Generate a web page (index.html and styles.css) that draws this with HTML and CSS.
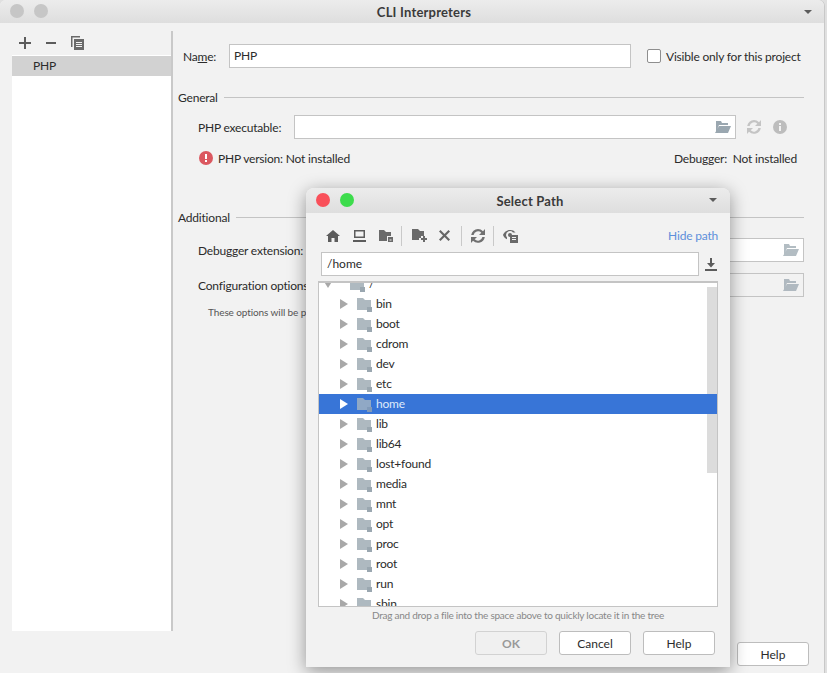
FILE: index.html
```html
<!DOCTYPE html>
<html>
<head>
<meta charset="UTF-8">
<title>CLI Interpreters</title>
<link rel="stylesheet" href="styles.css">
</head>
<body>
<svg class="defs" width="0" height="0">
	<symbol id="folder" viewBox="0 0 16 14"><path d="M0 0h6l2 2h6v10H0z" fill="#aeb9c0"/><path d="M10 9h5v5h-5z" fill="#9aa7b0"/></symbol>
	<symbol id="open" viewBox="0 0 16 12"><path d="M1 0h5l1 2h6v2H4L1 11z M4 5h12l-3 7H0z" fill="#9aa7b0"/></symbol>
	<symbol id="sync" viewBox="0 0 14 14"><path d="M7 0a7 7 0 0 1 5 2.200L14 0v6H8l2.300-2.300A4.600 4.600 0 0 0 2.600 6H.2A7 7 0 0 1 7 0zM0 8h6l-2.300 2.300A4.600 4.600 0 0 0 11.400 8h2.400A7 7 0 0 1 2 11.800L0 14z"/></symbol>
</svg>
<div class="window">
	<div class="titlebar">
		<span class="dots"><i></i><i></i></span>
		<b class="title">CLI Interpreters</b>
		<span class="arrow"></span>
	</div>
	<div class="content">
		<div class="side">
			<div class="side-tools">
				<svg width="12" height="12" viewBox="0 0 12 12"><path d="M5 0h2v5h5v2H7v5H5V7H0V5h5z" fill="#5c5c5c"/></svg>
				<svg width="12" height="12" viewBox="0 0 12 12"><path d="M1 5h10v2H1z" fill="#5c5c5c"/></svg>
				<svg width="13" height="14" viewBox="0 0 13 14"><path d="M0 0h9v1.500H1.500V11H0z M3 3h10v11H3z" fill="#6a6a6a"/><path d="M5 6h6v1H5zM5 8h6v1H5zM5 10h6v1H5z" fill="#f2f2f2"/></svg>
			</div>
			<div class="side-list">
				<div class="side-item">PHP</div>
			</div>
		</div>
		<div class="main">
			<div class="name-row">
				<label class="name-label">Na<u>m</u>e:</label>
				<div class="field name-field">PHP</div>
				<span class="check"></span>
				<span class="check-label">Visible only for this project</span>
			</div>
			<div class="section general"><span>General</span><i></i></div>
			<div class="exe-row">
				<label>PHP executable:</label>
				<div class="field exe-field"><svg class="open-icon" width="16" height="12"><use href="#open"/></svg></div>
				<svg class="dim" width="14" height="14"><use href="#sync"/></svg>
				<svg class="info" width="14" height="14" viewBox="0 0 14 14"><circle cx="7" cy="7" r="7" fill="#bdbdbd"/><path d="M6 3h2v2H6zM6 6h2v5H6z" fill="#f2f2f2"/></svg>
			</div>
			<div class="version-row">
				<svg width="14" height="14" viewBox="0 0 14 14"><circle cx="7" cy="7" r="7" fill="#db5860"/><path d="M6 3h2v5H6zM6 9h2v2H6z" fill="#fff"/></svg>
				<span class="version">PHP version: Not installed</span>
				<span class="debugger">Debugger:&nbsp; Not installed</span>
			</div>
			<div class="section additional"><span>Additional</span><i></i></div>
			<div class="opt-row">
				<label>Debugger extension:</label>
				<div class="field opt-field"><svg class="open-icon" width="16" height="12"><use href="#open"/></svg></div>
			</div>
			<div class="opt-row second">
				<label>Configuration options:</label>
				<div class="field opt-field off"><svg class="open-icon" width="16" height="12"><use href="#open"/></svg></div>
			</div>
			<div class="hint">These options will be passed to PHP</div>
		</div>
	</div>
	<div class="bottom"><button class="btn help-main">Help</button></div>
</div>

<div class="dialog">
	<div class="dlg-title">
		<span class="lights"><i class="red"></i><i class="green"></i></span>
		<b class="title">Select Path</b>
		<span class="arrow"></span>
	</div>
	<div class="dlg-tools">
		<svg width="14" height="12" viewBox="0 0 14 12"><path d="M7 0l7 6h-2v6H8.500V8h-3v4H2V6H0z" fill="#5c5c5c"/></svg>
		<svg class="tool-laptop" width="13" height="12" viewBox="0 0 13 12"><path d="M1 0h11v8H1zM2.500 1.500v5h8v-5zM0 10h13v2H0z" fill="#5c5c5c" fill-rule="evenodd"/></svg>
		<svg class="tool-folder" width="14" height="13" viewBox="0 0 14 13"><path d="M0 1h5l2 2h5v4H8v5H0z" fill="#6a6a6a"/><path d="M9 8h5v5H9z" fill="#6a6a6a"/><path d="M10.500 10.500h2v1h-2z" fill="#f2f2f2"/></svg>
		<i class="sep sep-a"></i>
		<svg class="tool-new" width="15" height="13" viewBox="0 0 15 13"><path d="M0 0h6l2 2h4v5H9v2H7v2H0z" fill="#6a6a6a"/><path d="M11 7h2v2h2v2h-2v2h-2v-2H9V9h2z" fill="#6a6a6a"/></svg>
		<svg class="tool-x" width="11" height="11" viewBox="0 0 11 11"><path d="M1.500 0l4 4 4-4L11 1.500l-4 4 4 4L9.500 11l-4-4-4 4L0 9.500l4-4-4-4z" fill="#666"/></svg>
		<i class="sep"></i>
		<svg class="tool-sync" width="14" height="14" fill="#707070"><use href="#sync"/></svg>
		<i class="sep sep-c"></i>
		<svg class="tool-eye" width="15" height="14" viewBox="0 0 15 14"><path d="M7 1C3.500 1 1 3.500 0 6c.6 1.600 2 3.400 4 4.300V8.500A4 4 0 0 1 3 6a4 4 0 0 1 7-2.600h2.600A7 7 0 0 0 7 1z" fill="#6a6a6a"/><circle cx="7" cy="6" r="2" fill="#6a6a6a"/><path d="M7 6h8v8H7z" fill="#6a6a6a"/><path d="M9 8h4v1H9zM9 10h4v1H9z" fill="#f2f2f2"/></svg>
		<span class="hide-path">Hide path</span>
	</div>
	<div class="path-row">
		<div class="field path-field">/home</div>
		<svg width="12" height="13" viewBox="0 0 12 13"><path d="M5 0h2v5h3L6 9.500 2 5h3zM0 11h12v2H0z" fill="#5c5c5c"/></svg>
	</div>
	<div class="tree">
		<div class="tree-rows">
			<div class="row root"><span class="tri down"></span><svg width="16" height="14"><use href="#folder"/></svg><span>/</span></div>
			<div class="row"><span class="tri"></span><svg width="16" height="14"><use href="#folder"/></svg><span>bin</span></div>
			<div class="row"><span class="tri"></span><svg width="16" height="14"><use href="#folder"/></svg><span>boot</span></div>
			<div class="row"><span class="tri"></span><svg width="16" height="14"><use href="#folder"/></svg><span>cdrom</span></div>
			<div class="row"><span class="tri"></span><svg width="16" height="14"><use href="#folder"/></svg><span>dev</span></div>
			<div class="row"><span class="tri"></span><svg width="16" height="14"><use href="#folder"/></svg><span>etc</span></div>
			<div class="row selected"><span class="tri"></span><svg width="16" height="14"><use href="#folder"/></svg><span>home</span></div>
			<div class="row"><span class="tri"></span><svg width="16" height="14"><use href="#folder"/></svg><span>lib</span></div>
			<div class="row"><span class="tri"></span><svg width="16" height="14"><use href="#folder"/></svg><span>lib64</span></div>
			<div class="row"><span class="tri"></span><svg width="16" height="14"><use href="#folder"/></svg><span>lost+found</span></div>
			<div class="row"><span class="tri"></span><svg width="16" height="14"><use href="#folder"/></svg><span>media</span></div>
			<div class="row"><span class="tri"></span><svg width="16" height="14"><use href="#folder"/></svg><span>mnt</span></div>
			<div class="row"><span class="tri"></span><svg width="16" height="14"><use href="#folder"/></svg><span>opt</span></div>
			<div class="row"><span class="tri"></span><svg width="16" height="14"><use href="#folder"/></svg><span>proc</span></div>
			<div class="row"><span class="tri"></span><svg width="16" height="14"><use href="#folder"/></svg><span>root</span></div>
			<div class="row"><span class="tri"></span><svg width="16" height="14"><use href="#folder"/></svg><span>run</span></div>
			<div class="row"><span class="tri"></span><svg width="16" height="14"><use href="#folder"/></svg><span>sbin</span></div>
		</div>
		<div class="scroll"></div>
	</div>
	<div class="drag-hint">Drag and drop a file into the space above to quickly locate it in the tree</div>
	<div class="dlg-buttons">
		<button class="btn disabled">OK</button>
		<button class="btn">Cancel</button>
		<button class="btn">Help</button>
	</div>
</div>
</body>
</html>
```

FILE: styles.css
```css
*{box-sizing:border-box}
html,body{height:100%}
body{margin:0;background:#e0e0e0;font:12px Lato,"Open Sans",sans-serif;letter-spacing:-.2px;color:#2b2b2b;overflow:hidden}
.defs{position:absolute}
.window{width:824px;height:673px;background:#f2f2f2;border-radius:6px 6px 0 0;box-shadow:1px 0 #c8c8c8;display:flex;flex-direction:column}
.titlebar{height:23px;flex:none;display:flex;align-items:center;justify-content:center;padding-left:24px;background:linear-gradient(#ececec,#dedede);border-radius:6px 6px 0 0;position:relative}
.title{font-size:13px;letter-spacing:.2px;color:#3a3a3a}
.dots{position:absolute;left:10px;top:4px;display:flex;gap:10px}
.dots i{width:14px;height:14px;border-radius:50%;background:#c6c6c6}
.arrow{position:absolute;right:12px;top:10px;border:4px solid transparent;border-top:4px solid #5c5c5c;border-bottom:0}
.content{flex:1;display:flex;padding-left:12px;min-height:0;position:relative;z-index:1}
.side{width:161px;height:600px;flex:none;border-right:2px solid #c9c9c9;margin-top:8px;display:flex;flex-direction:column}
.side-tools{height:24px;flex:none;display:flex;align-items:center;gap:14px;padding:0 0 0 7px}
.side-list{flex:1;background:#fff;padding-top:1px}
.side-item{height:20px;background:#d2d2d2;padding-left:21px;line-height:20px}
.main{flex:1;padding:0 20px 0 5px}
.field{background:#fff;border:1px solid #c4c4c4;height:24px;line-height:22px;display:flex;align-items:center;justify-content:space-between;padding:0 4px}
.name-row{display:flex;align-items:center;margin-top:21px;height:24px;padding-left:5px}
.name-label{width:46px}
.name-field{width:402px}
.check{width:14px;height:14px;flex:none;border:1px solid #8e8e8e;border-radius:2px;background:#fff;margin-left:16px}
.check-label{margin-left:5px;white-space:nowrap}
.section{display:flex;align-items:center;gap:6px}
.section i{flex:1;height:1px;background:#c4c4c4}
.general{margin-top:20px;height:18px}
.exe-row{display:flex;align-items:center;height:24px;margin-top:9px;padding-left:20px}
.exe-row label{width:96px}
.exe-field{width:442px}
.dim{fill:#c4c4c4;margin-left:11px}
.info{margin-left:12px}
.open-icon{flex:none;margin-left:auto}
.version-row{display:flex;align-items:center;height:18px;margin-top:10px;padding-left:21px}
.version{margin-left:5px}
.debugger{margin-left:auto;margin-right:7px}
.additional{margin-top:41px;height:18px}
.opt-row{display:flex;align-items:center;height:24px;margin-top:12px;padding-left:20px}
.opt-row label{width:180px}
.opt-field{flex:1}
.opt-field .open-icon{opacity:.75}
.off{background:#f2f2f2}
.second{margin-top:11px}
.hint{font-size:10px;letter-spacing:-.1px;color:#555;padding:9px 0 0 30px}
.bottom{position:absolute;left:0;width:824px;bottom:0;height:42px;background:#f2f2f2;z-index:0;display:flex;justify-content:flex-end;padding:11px 15px 0 0}
.btn{width:72px;height:24px;border:1px solid #bdbdbd;border-radius:3px;background:#fff;font:12px Lato,sans-serif;color:#2b2b2b;padding:1px 0 0}
.disabled{background:#f0f0f0;color:#999;font-weight:bold;border-color:#d2d2d2}

.dialog{position:absolute;left:306px;top:188px;width:424px;height:479px;background:#f2f2f2;border-radius:8px 8px 0 0;box-shadow:0 4px 18px rgba(0,0,0,.4);z-index:5;display:flex;flex-direction:column}
.dlg-title{height:25px;flex:none;display:flex;align-items:center;justify-content:center;padding-left:24px;background:linear-gradient(#ececec,#dedede);border-radius:8px 8px 0 0;position:relative}
.lights{position:absolute;left:10px;top:5px;display:flex;gap:10px}
.lights i{width:14px;height:14px;border-radius:50%}
.red{background:#f9505a}
.green{background:#3ddc4c}
.dlg-title .arrow{right:13px}
.dlg-tools{height:21px;flex:none;margin-top:12px;display:flex;align-items:center;gap:11px;padding:0 12px 0 20px}
.tool-laptop,.tool-folder{margin-left:2px}
.sep-a{margin-left:-3px}
.tool-new{margin-left:-1px}
.tool-x{margin-left:1px}
.tool-sync,.tool-eye{margin-left:-2px}
.sep-c{margin-left:-3px}
.sep{width:1px;height:20px;background:#c9c9c9}
.hide-path{margin-left:auto;color:#5d8fdb}
.path-row{display:flex;align-items:center;gap:6px;margin:6px 0 0 15px;height:24px}
.path-field{width:378px;padding-left:5px;letter-spacing:0}
.tree{margin:5px 0 0 12px;width:400px;height:326px;background:#fff;border:1px solid #c4c4c4;border-top:2px solid #c4c4c4;position:relative;overflow:hidden}
.tree-rows{margin-top:-9px;position:relative;z-index:1}
.row{height:20px;display:flex;align-items:center;padding-left:21px;color:#2b2b2b}
.row svg{margin:2px 3px 0 9px}
.row span:last-child{margin-bottom:2px}
.tri{width:0;height:0;border:5px solid transparent;border-left:8px solid #a8a8a8;border-right:0}
.tri.down{border:5px solid transparent;border-top:8px solid #a8a8a8;border-bottom:0;margin-left:-17px;margin-right:17px}
.root svg{margin-left:0}
.selected{background:#3875d7;color:#dfeafa}
.selected .tri{border-left-color:#fff}
.selected svg{opacity:.75}
.scroll{position:absolute;right:0;top:4px;width:10px;height:186px;background:#dcdcdc}
.drag-hint{font-size:10px;letter-spacing:-.24px;color:#888;text-align:center;margin-top:1px;height:14px;line-height:14px}
.dlg-buttons{display:flex;justify-content:flex-end;gap:12px;padding:9px 15px 0 0}
```
